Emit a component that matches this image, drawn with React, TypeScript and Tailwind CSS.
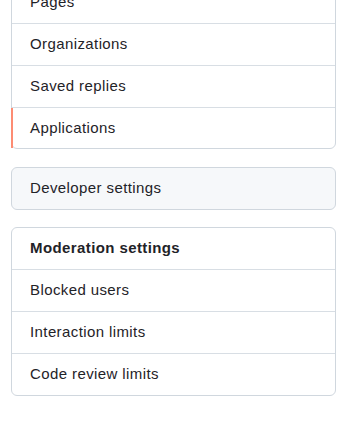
import React from 'react';

const Row = ({ label, active, bold, first, last }: { label: string; active?: boolean; bold?: boolean; first?: boolean; last?: boolean }) => (
    <div className={`relative flex items-center pl-[18px] ${first ? 'h-[41px]' : 'border-t border-[#d8dee4]'} ${!first && last ? 'h-[41px]' : ''} ${!first && !last ? 'h-[42px]' : ''}`}>
        {active && <span className="absolute left-[-1px] top-0 bottom-0 w-[2px] bg-[#fd8c73]" />}
        <span className={`text-[15px] tracking-[0.4px] text-[#1f2328] ${bold ? 'font-semibold' : ''}`}>{label}</span>
    </div>
);

export default function App() {
    return (
        <div className="w-[358px] h-[422px] bg-white overflow-hidden pl-[11px]" style={{ fontFamily: '"Liberation Sans", Arial, sans-serif' }}>
            <div className="w-[325px] flex flex-col -mt-[19px]">
                <div className="border border-[#d0d7de] rounded-[6px]">
                    <Row label="Pages" first />
                    <Row label="Organizations" />
                    <Row label="Saved replies" />
                    <Row label="Applications" active last />
                </div>
                <div className="mt-[18px] border border-[#d0d7de] rounded-[6px] bg-[#f6f8fa]">
                    <Row label="Developer settings" first />
                </div>
                <div className="mt-[17px] border border-[#d0d7de] rounded-[6px]">
                    <Row label="Moderation settings" bold first />
                    <Row label="Blocked users" />
                    <Row label="Interaction limits" />
                    <Row label="Code review limits" />
                </div>
            </div>
        </div>
    );
}
